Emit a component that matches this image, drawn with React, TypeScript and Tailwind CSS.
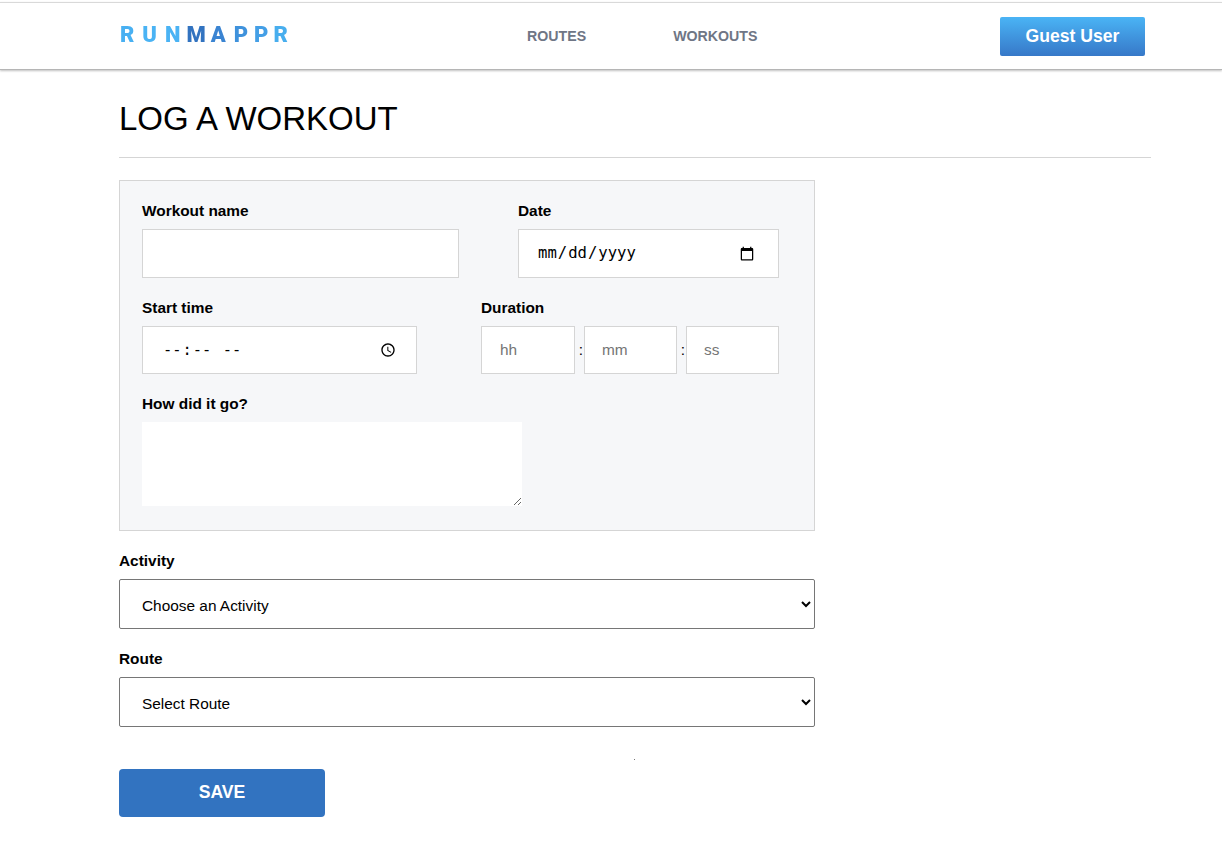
import React from 'react';

const Logo = () => (
  <div className="flex items-center -mt-[3px] text-[22px] leading-none font-black font-['Roboto',sans-serif] w-[168px] whitespace-nowrap blur-[0.3px]">
    <span className="text-[#48b0f2]">R</span>
    <span className="text-[#4ab3f4] ml-[8px]">U</span>
    <span className="text-[#4ab3f4] ml-[8px]">N</span>
    <span className="text-[#3273c0] ml-[6px]">M</span>
    <span className="text-[#3a84d2] ml-[5px]">A</span>
    <span className="text-[#3f92dc] ml-[8px]">P</span>
    <span className="text-[#449fe6] ml-[6px]">P</span>
    <span className="text-[#48aeee] ml-[5px]">R</span>
  </div>
);

const Label = ({ children }: { children: React.ReactNode }) => (
  <label className="block text-[15.4px] leading-[17px] font-bold text-black">{children}</label>
);

const durationInput = "w-full h-12 bg-white border border-[#d5d5d5] text-[15.4px] placeholder:text-[#757575] outline-none";
const selectClass = "mt-[10px] block w-full h-[50px] border border-[#767676] rounded-[2px] pl-[18px] pt-[2px] text-[15.4px] bg-white outline-none appearance-auto";

export default function App() {
  return (
    <div className="min-h-[861px] bg-white font-['Liberation_Sans',sans-serif] text-black">
      {/* Top nav */}
      <div className="pt-[2px]">
        <header className="h-[68px] border-t border-[#d9d9d9] border-b border-b-[#b5b5b5] shadow-[0_1px_2px_rgba(0,0,0,0.25)] flex items-center pl-[120px] pr-[77px]">
          <Logo />
          <nav className="flex gap-[87px] ml-[239px] mt-[1px] text-[14.2px] font-bold text-[#6f7685]">
            <a>ROUTES</a>
            <a>WORKOUTS</a>
          </nav>
          <button className="ml-auto w-[145px] h-[39px] rounded-[2px] bg-gradient-to-b from-[#4ab4f5] to-[#3778c8] text-white text-[17.6px] font-bold">
            Guest User
          </button>
        </header>
      </div>

      <main className="pl-[119px] pr-[71px]">
        <h1 className="text-[33px] leading-[38px] mt-[30px] font-normal">LOG A WORKOUT</h1>
        <hr className="mt-[19px] border-[#d5d5d5]" />

        <div className="w-[696px]">
          <div className="mt-[22px] h-[351px] bg-[#f6f7f9] border border-[#d5d5d5] pl-[22px] pr-[35px] pt-[21px]">
            <div className="flex justify-between">
              <div className="w-[317px]">
                <Label>Workout name</Label>
                <input type="text" className="mt-[10px] w-full h-[49px] bg-white border border-[#d5d5d5] outline-none" />
              </div>
              <div className="w-[261px]">
                <Label>Date</Label>
                <input type="date" className="mt-[10px] w-full h-[49px] bg-white border border-[#d5d5d5] pl-[18px] pr-[21px] text-[15.6px] font-['DejaVu_Sans_Mono',monospace] outline-none" />
              </div>
            </div>

            <div className="flex justify-between mt-[21px]">
              <div className="w-[275px]">
                <Label>Start time</Label>
                <input type="time" className="mt-[10px] w-full h-12 bg-white border border-[#d5d5d5] pl-[19px] pr-[17px] pt-[1px] text-[15.4px] font-['DejaVu_Sans_Mono',monospace] outline-none" />
              </div>
              <div className="w-[298px]">
                <Label>Duration</Label>
                <div className="mt-[10px] flex items-center">
                  <div className="w-[94px]"><input placeholder="hh" className={`${durationInput} pl-[18px]`} /></div>
                  <span className="w-[9px] text-center text-[15.4px] pl-[3px]">:</span>
                  <div className="w-[93px]"><input placeholder="mm" className={`${durationInput} pl-[17px]`} /></div>
                  <span className="w-[9px] text-center text-[15.4px] pl-[3px]">:</span>
                  <div className="w-[93px]"><input placeholder="ss" className={`${durationInput} pl-[17px]`} /></div>
                </div>
              </div>
            </div>

            <div className="mt-[21px]">
              <Label>How did it go?</Label>
              <textarea className="block mt-[10px] w-[380px] h-[84px] bg-white outline-none" />
            </div>
          </div>

          <div className="mt-[21px]">
            <Label>Activity</Label>
            <select className={selectClass}>
              <option>Choose an Activity</option>
            </select>
          </div>

          <div className="mt-[21px]">
            <Label>Route</Label>
            <select className={selectClass}>
              <option>Select Route</option>
            </select>
          </div>

          <div className="pl-[515px] pt-[32px]">
            <div className="w-px h-px bg-[#777777]" />
          </div>

          <button className="mt-[9px] block w-[206px] h-12 rounded-[4px] bg-[#3273c0] text-white text-[17.6px] font-bold pb-[2px]">
            SAVE
          </button>
        </div>
      </main>
    </div>
  );
}
